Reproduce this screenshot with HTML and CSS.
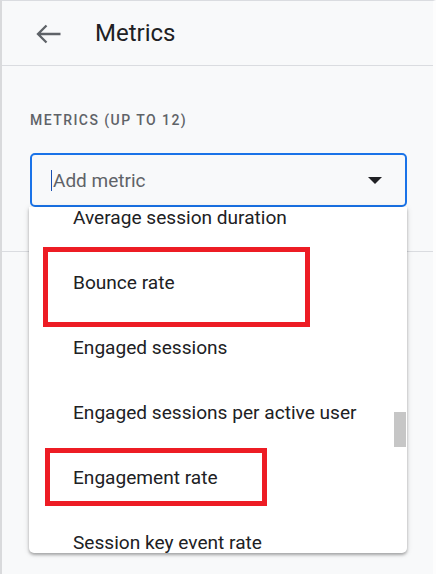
FILE: index.html
```html
<!DOCTYPE html>
<html lang="en">
<head>
<meta charset="utf-8">
<title>Metrics</title>
<link rel="stylesheet" href="styles.css">
</head>
<body>
<div class="app">
  <header class="header">
    <svg class="back" width="25" height="20" viewBox="0 0 25 20" aria-hidden="true">
      <path d="M2 10H24.5M10.5 1.5L2 10L10.5 18.5" fill="none" stroke="#5f6368" stroke-width="2.3"/>
    </svg>
    <h1 class="title">Metrics</h1>
  </header>
  <section class="section">
    <div class="label">METRICS (UP TO 12)</div>
    <div class="field">
      <span class="caret"></span>
      <span class="placeholder">Add metric</span>
      <span class="tri"></span>
    </div>
  </section>
  <div class="menu">
    <ul class="list">
      <li class="item">Average session duration</li>
      <li class="item">Bounce rate</li>
      <li class="item">Engaged sessions</li>
      <li class="item">Engaged sessions per active user</li>
      <li class="item">Engagement rate</li>
      <li class="item">Session key event rate</li>
    </ul>
    <div class="thumb"></div>
    <div class="mark mark-1"></div>
    <div class="mark mark-2"></div>
  </div>
</div>
</body>
</html>
```
FILE: styles.css
```css
* { box-sizing: border-box; }
html, body { margin: 0; padding: 0; }
body {
  width: 436px;
  height: 574px;
  overflow: hidden;
  font-family: Roboto, "Liberation Sans", Arial, sans-serif;
  background: #f8f9fa;
}
.app {
  position: relative;
  height: 574px;
  border-top: 1px solid #dadce0;
  border-left: 2px solid #d9dadc;
  border-right: 3px solid #fdfdfd;
  background: #f8f9fa;
}
.header {
  height: 65px;
  border-bottom: 1px solid #dadce0;
  display: flex;
  align-items: center;
  padding-left: 34px;
}
.back { display: block; margin-top: 1px; }
.title {
  margin: 0 0 0 34px;
  font-size: 24px;
  font-weight: 400;
  color: #202124;
  line-height: 30px;
}
.section {
  height: 186px;
  border-bottom: 1px solid #dadce0;
  padding: 44px 26px 0 28px;
}
.label {
  font-size: 14px;
  line-height: 20px;
  font-weight: 500;
  letter-spacing: 1.45px;
  color: #5f6368;
}
.field {
  margin-top: 23px;
  height: 54px;
  border: 2px solid #1a73e8;
  border-radius: 5px;
  display: flex;
  align-items: center;
  padding: 0 23px 0 19px;
}
.caret {
  width: 1px;
  height: 21px;
  background: #1a4fb0;
  margin-right: 1px;
}
.placeholder {
  font-size: 19px;
  color: #5f6368;
}
.tri {
  margin-left: auto;
  width: 0;
  height: 0;
  border-left: 7px solid transparent;
  border-right: 7px solid transparent;
  border-top: 7px solid #202124;
}
.menu {
  position: absolute;
  left: 27px;
  top: 206px;
  width: 378px;
  height: 346px;
  background: #fff;
  border-radius: 0 0 5px 5px;
  box-shadow: 0 2px 3px rgba(0,0,0,0.28), 0 1px 6px rgba(0,0,0,0.12);
  overflow: hidden;
}
.list {
  list-style: none;
  margin: -22px 0 0 0;
  padding: 0;
}
.item {
  height: 65px;
  display: flex;
  align-items: center;
  padding-left: 44px;
  font-size: 19.1px;
  color: #202124;
}
.thumb {
  position: absolute;
  left: 365px;
  top: 205px;
  width: 12px;
  height: 35px;
  background: #c6c6c6;
}
.mark {
  position: absolute;
  border: 5px solid #ed1c24;
}
.mark-1 { left: 14px; top: 40px; width: 267px; height: 80px; }
.mark-2 { left: 16px; top: 241px; width: 222px; height: 58px; }
```
